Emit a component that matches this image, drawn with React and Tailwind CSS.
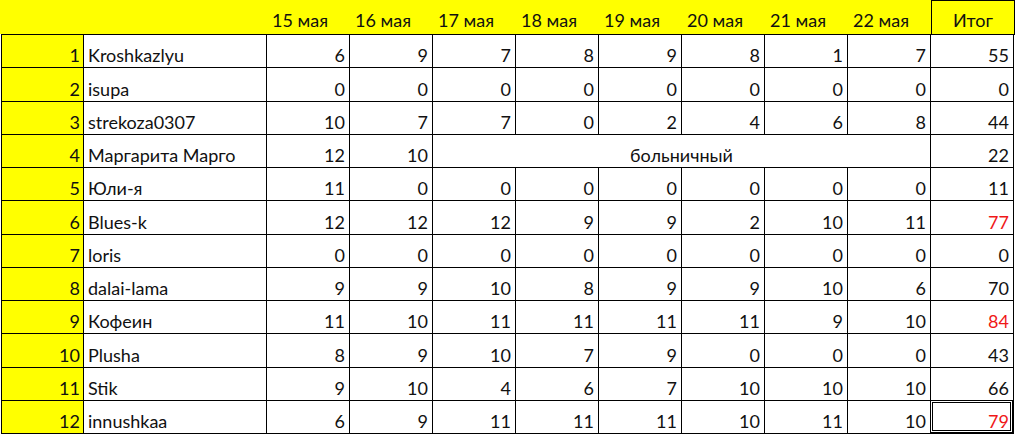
import React from "react";

const dates = ["15 мая", "16 мая", "17 мая", "18 мая", "19 мая", "20 мая", "21 мая", "22 мая"];

const rows = [
  { n: 1, name: "Kroshkazlyu", v: [6, 9, 7, 8, 9, 8, 1, 7], t: 55 },
  { n: 2, name: "isupa", v: [0, 0, 0, 0, 0, 0, 0, 0], t: 0 },
  { n: 3, name: "strekoza0307", v: [10, 7, 7, 0, 2, 4, 6, 8], t: 44 },
  { n: 4, name: "Маргарита Марго", v: [12, 10], sick: true, t: 22 },
  { n: 5, name: "Юли-я", v: [11, 0, 0, 0, 0, 0, 0, 0], t: 11 },
  { n: 6, name: "Blues-k", v: [12, 12, 12, 9, 9, 2, 10, 11], t: 77, red: true },
  { n: 7, name: "loris", v: [0, 0, 0, 0, 0, 0, 0, 0], t: 0 },
  { n: 8, name: "dalai-lama", v: [9, 9, 10, 8, 9, 9, 10, 6], t: 70 },
  { n: 9, name: "Кофеин", v: [11, 10, 11, 11, 11, 11, 9, 10], t: 84, red: true },
  { n: 10, name: "Plusha", v: [8, 9, 10, 7, 9, 0, 0, 0], t: 43 },
  { n: 11, name: "Stik", v: [9, 10, 4, 6, 7, 10, 10, 10], t: 66 },
  { n: 12, name: "innushkaa", v: [6, 9, 11, 11, 11, 10, 11, 10], t: 79, red: true, sel: true },
];

const cell = "border-r border-b border-black flex items-end pb-[3px] leading-none";

export default function App() {
  return (
    <div
      className="w-[1016px] h-[435px] bg-white text-[18px] text-[#111]"
      style={{ fontFamily: "Lato, 'Open Sans', sans-serif" }}
    >
      {/* header */}
      <div className="flex h-[34px] w-[1015px] bg-[#ffff00]">
        <div className="w-[267px]" />
        {dates.map((d) => (
          <div key={d} className="w-[83px] flex items-end pb-[5px] pl-[5px] leading-none">
            {d}
          </div>
        ))}
        <div className="w-[84px] border-l border-t border-r border-black flex items-end justify-center pb-[5px] leading-none">
          Итог
        </div>
      </div>
      {/* body */}
      <div className="ml-px w-[1014px] border-t border-black grid grid-cols-[83px_183px_repeat(9,83px)] auto-rows-[33.25px]">
        {rows.map((r) => (
          <React.Fragment key={r.n}>
            <div className={`${cell} border-l bg-[#ffff00] justify-end pr-[3px]`}>{r.n}</div>
            <div className={`${cell} pl-[4px]`}>{r.name}</div>
            {r.sick ? (
              <>
                {r.v.map((x, i) => (
                  <div key={i} className={`${cell} justify-end pr-[4px]`}>{x}</div>
                ))}
                <div className={`${cell} col-span-6 justify-center`}>больничный</div>
              </>
            ) : (
              r.v.map((x, i) => (
                <div key={i} className={`${cell} justify-end pr-[4px]`}>{x}</div>
              ))
            )}
            <div
              className={`${cell} justify-end pr-[4px] relative ${r.red ? "text-[#f01818]" : ""}`}
            >
              {r.sel && (
                <div className="absolute -top-px -left-px right-0 bottom-0 border-[3px] border-double border-black" />
              )}
              <span className="relative">{r.t}</span>
            </div>
          </React.Fragment>
        ))}
      </div>
    </div>
  );
}
